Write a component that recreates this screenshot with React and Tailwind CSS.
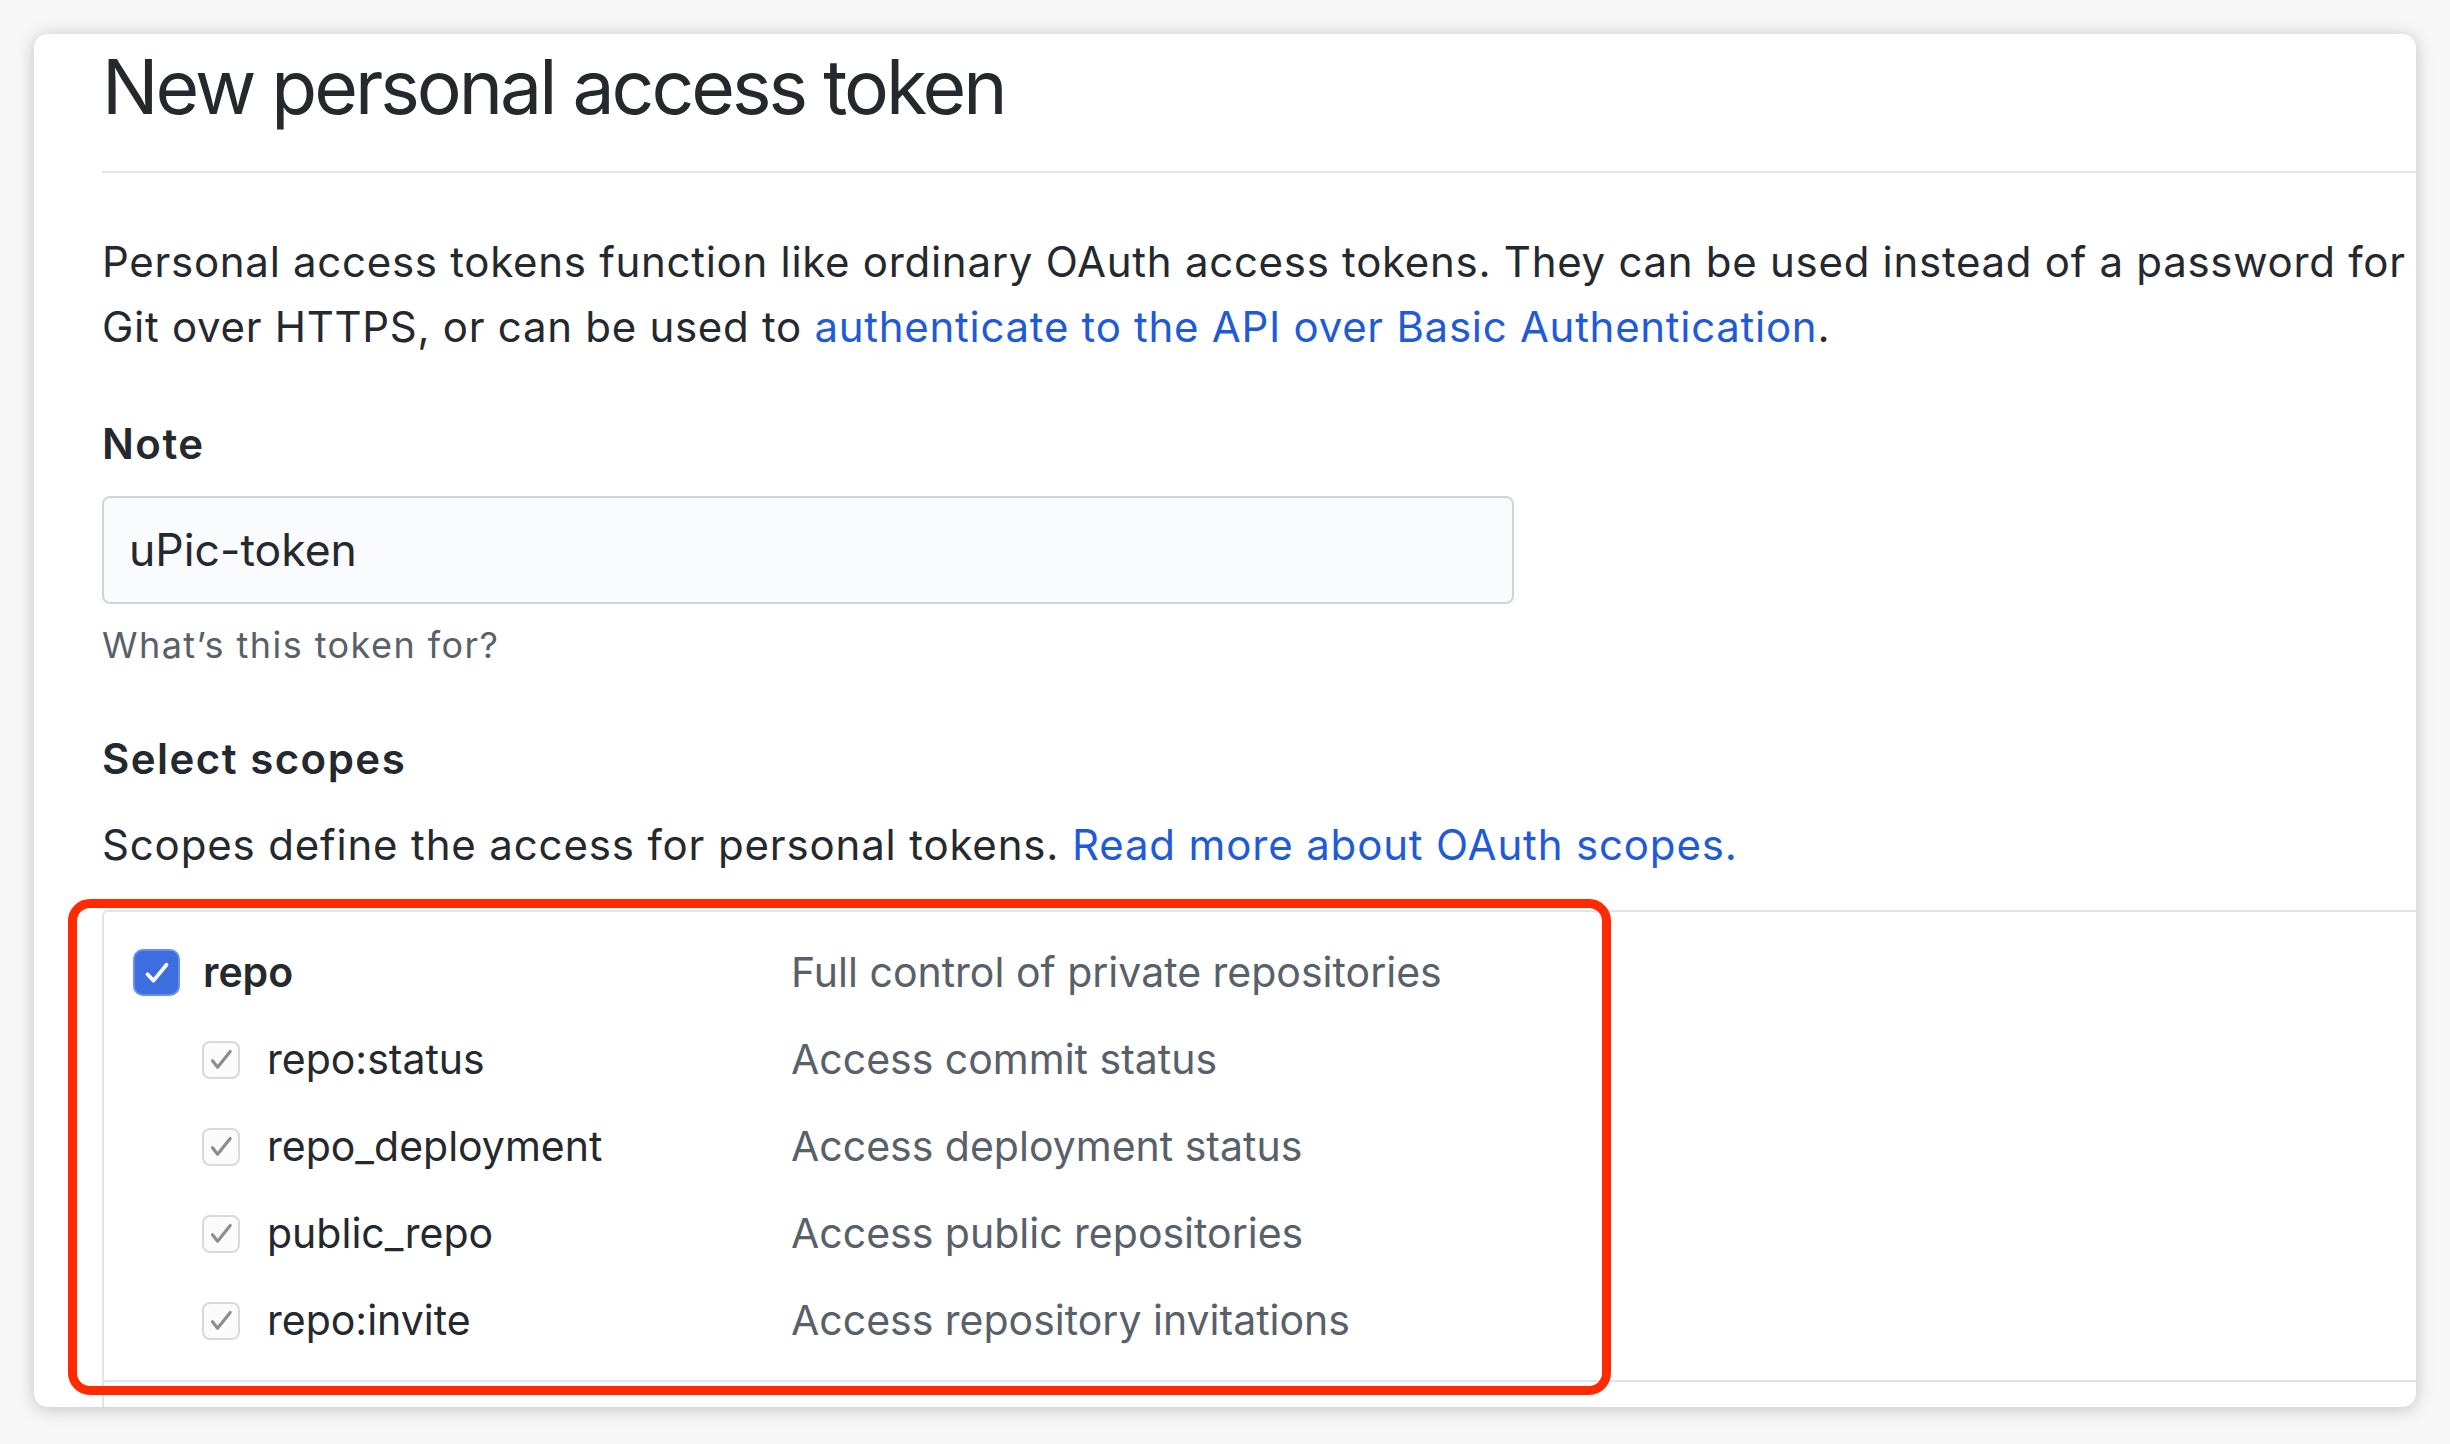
import React from "react";

const scopes = [
  { name: "repo:status", desc: "Access commit status" },
  { name: "repo_deployment", desc: "Access deployment status" },
  { name: "public_repo", desc: "Access public repositories" },
  { name: "repo:invite", desc: "Access repository invitations" },
];

function BlueCheck() {
  return (
    <span className="flex h-[47px] w-[47px] shrink-0 items-center justify-center rounded-[10px] border-2 border-[#6b90ea] bg-[#3d6ee0]">
      <svg viewBox="0 0 24 24" className="h-[38px] w-[38px]">
        <path d="M6 12.8l3.8 4L18 6.8" fill="none" stroke="white" strokeWidth="2.4" strokeLinecap="round" strokeLinejoin="round" />
      </svg>
    </span>
  );
}

function GrayCheck() {
  return (
    <span className="flex h-[38px] w-[38px] shrink-0 items-center justify-center rounded-[8px] border-2 border-[#d9d9d9] bg-[#fbfbfb]">
      <svg viewBox="0 0 24 24" className="h-[36px] w-[36px]">
        <path d="M6 12.5l3.6 4.6L18.5 6" fill="none" stroke="#8d8d8d" strokeWidth="2.2" strokeLinecap="round" strokeLinejoin="round" />
      </svg>
    </span>
  );
}

export default function App() {
  return (
    <div className="min-h-screen w-full bg-[#f7f7f7] pl-[34px] pt-[34px] font-['Inter','Liberation_Sans',sans-serif]">
      <div className="relative h-[1373px] w-[2382px] overflow-hidden rounded-[14px] bg-white shadow-[0_2px_18px_rgba(0,0,0,0.22)]">
        <div className="w-[2600px] pl-[68px] pt-[15px] text-[#24292e]">
          {/* Header */}
          <h2 className="border-b-2 border-[#e1e4e8] pb-[46px] text-[75px] font-normal leading-[76px] tracking-[-0.04em]">
            New personal access token
          </h2>

          <p className="mt-[56px] text-[42px] leading-[65px] tracking-[0.017em]">
            Personal access tokens function like ordinary OAuth access tokens. They can be used instead of a password for
            <br />
            Git over HTTPS, or can be used to{" "}
            <a className="text-[#1f5bd6]">authenticate to the API over Basic Authentication</a>.
          </p>

          {/* Note */}
          <label className="mt-[52px] block text-[42px] font-semibold leading-[65px] tracking-[0.035em]">Note</label>
          <div className="mt-[20px] flex h-[108px] w-[1412px] items-center rounded-[8px] border-2 border-[#d1d5da] bg-[#fafbfc] pl-[25px] text-[44.5px]">
            uPic-token
          </div>
          <p className="mt-[15px] text-[36px] leading-[52px] tracking-[0.04em] text-[#586069]">What’s this token for?</p>

          {/* Scopes */}
          <h3 className="mt-[55px] text-[42px] font-semibold leading-[65px] tracking-[0.035em]">Select scopes</h3>
          <p className="mt-[21px] text-[42px] leading-[65px] tracking-[0.02em]">
            Scopes define the access for personal tokens.{" "}
            <a className="text-[#1f5bd6]">Read more about OAuth scopes.</a>
          </p>

          <div className="relative mt-[33px]">
            <div className="rounded-tl-[6px] border-y-2 border-l-2 border-[#e1e4e8] pb-[16px] pl-[29px] pt-[17px] text-[41px]">
              <div className="flex h-[87px] items-center">
                <div className="flex w-[658px] items-center gap-[23px]">
                  <BlueCheck />
                  <span className="font-semibold">repo</span>
                </div>
                <span className="text-[#586069]">Full control of private repositories</span>
              </div>
              {scopes.map((s) => (
                <div key={s.name} className="flex h-[87px] items-center">
                  <div className="flex w-[658px] items-center gap-[27px] pl-[69px]">
                    <GrayCheck />
                    <span>{s.name}</span>
                  </div>
                  <span className="text-[#586069]">{s.desc}</span>
                </div>
              ))}
            </div>
            <div className="h-[40px] border-l-2 border-[#e1e4e8]" />

            {/* highlight box */}
            <div className="pointer-events-none absolute left-[-34px] top-[-11px] h-[496px] w-[1543px] rounded-[22px] border-[9px] border-[#ff2a00]" />
          </div>
        </div>
      </div>
    </div>
  );
}
